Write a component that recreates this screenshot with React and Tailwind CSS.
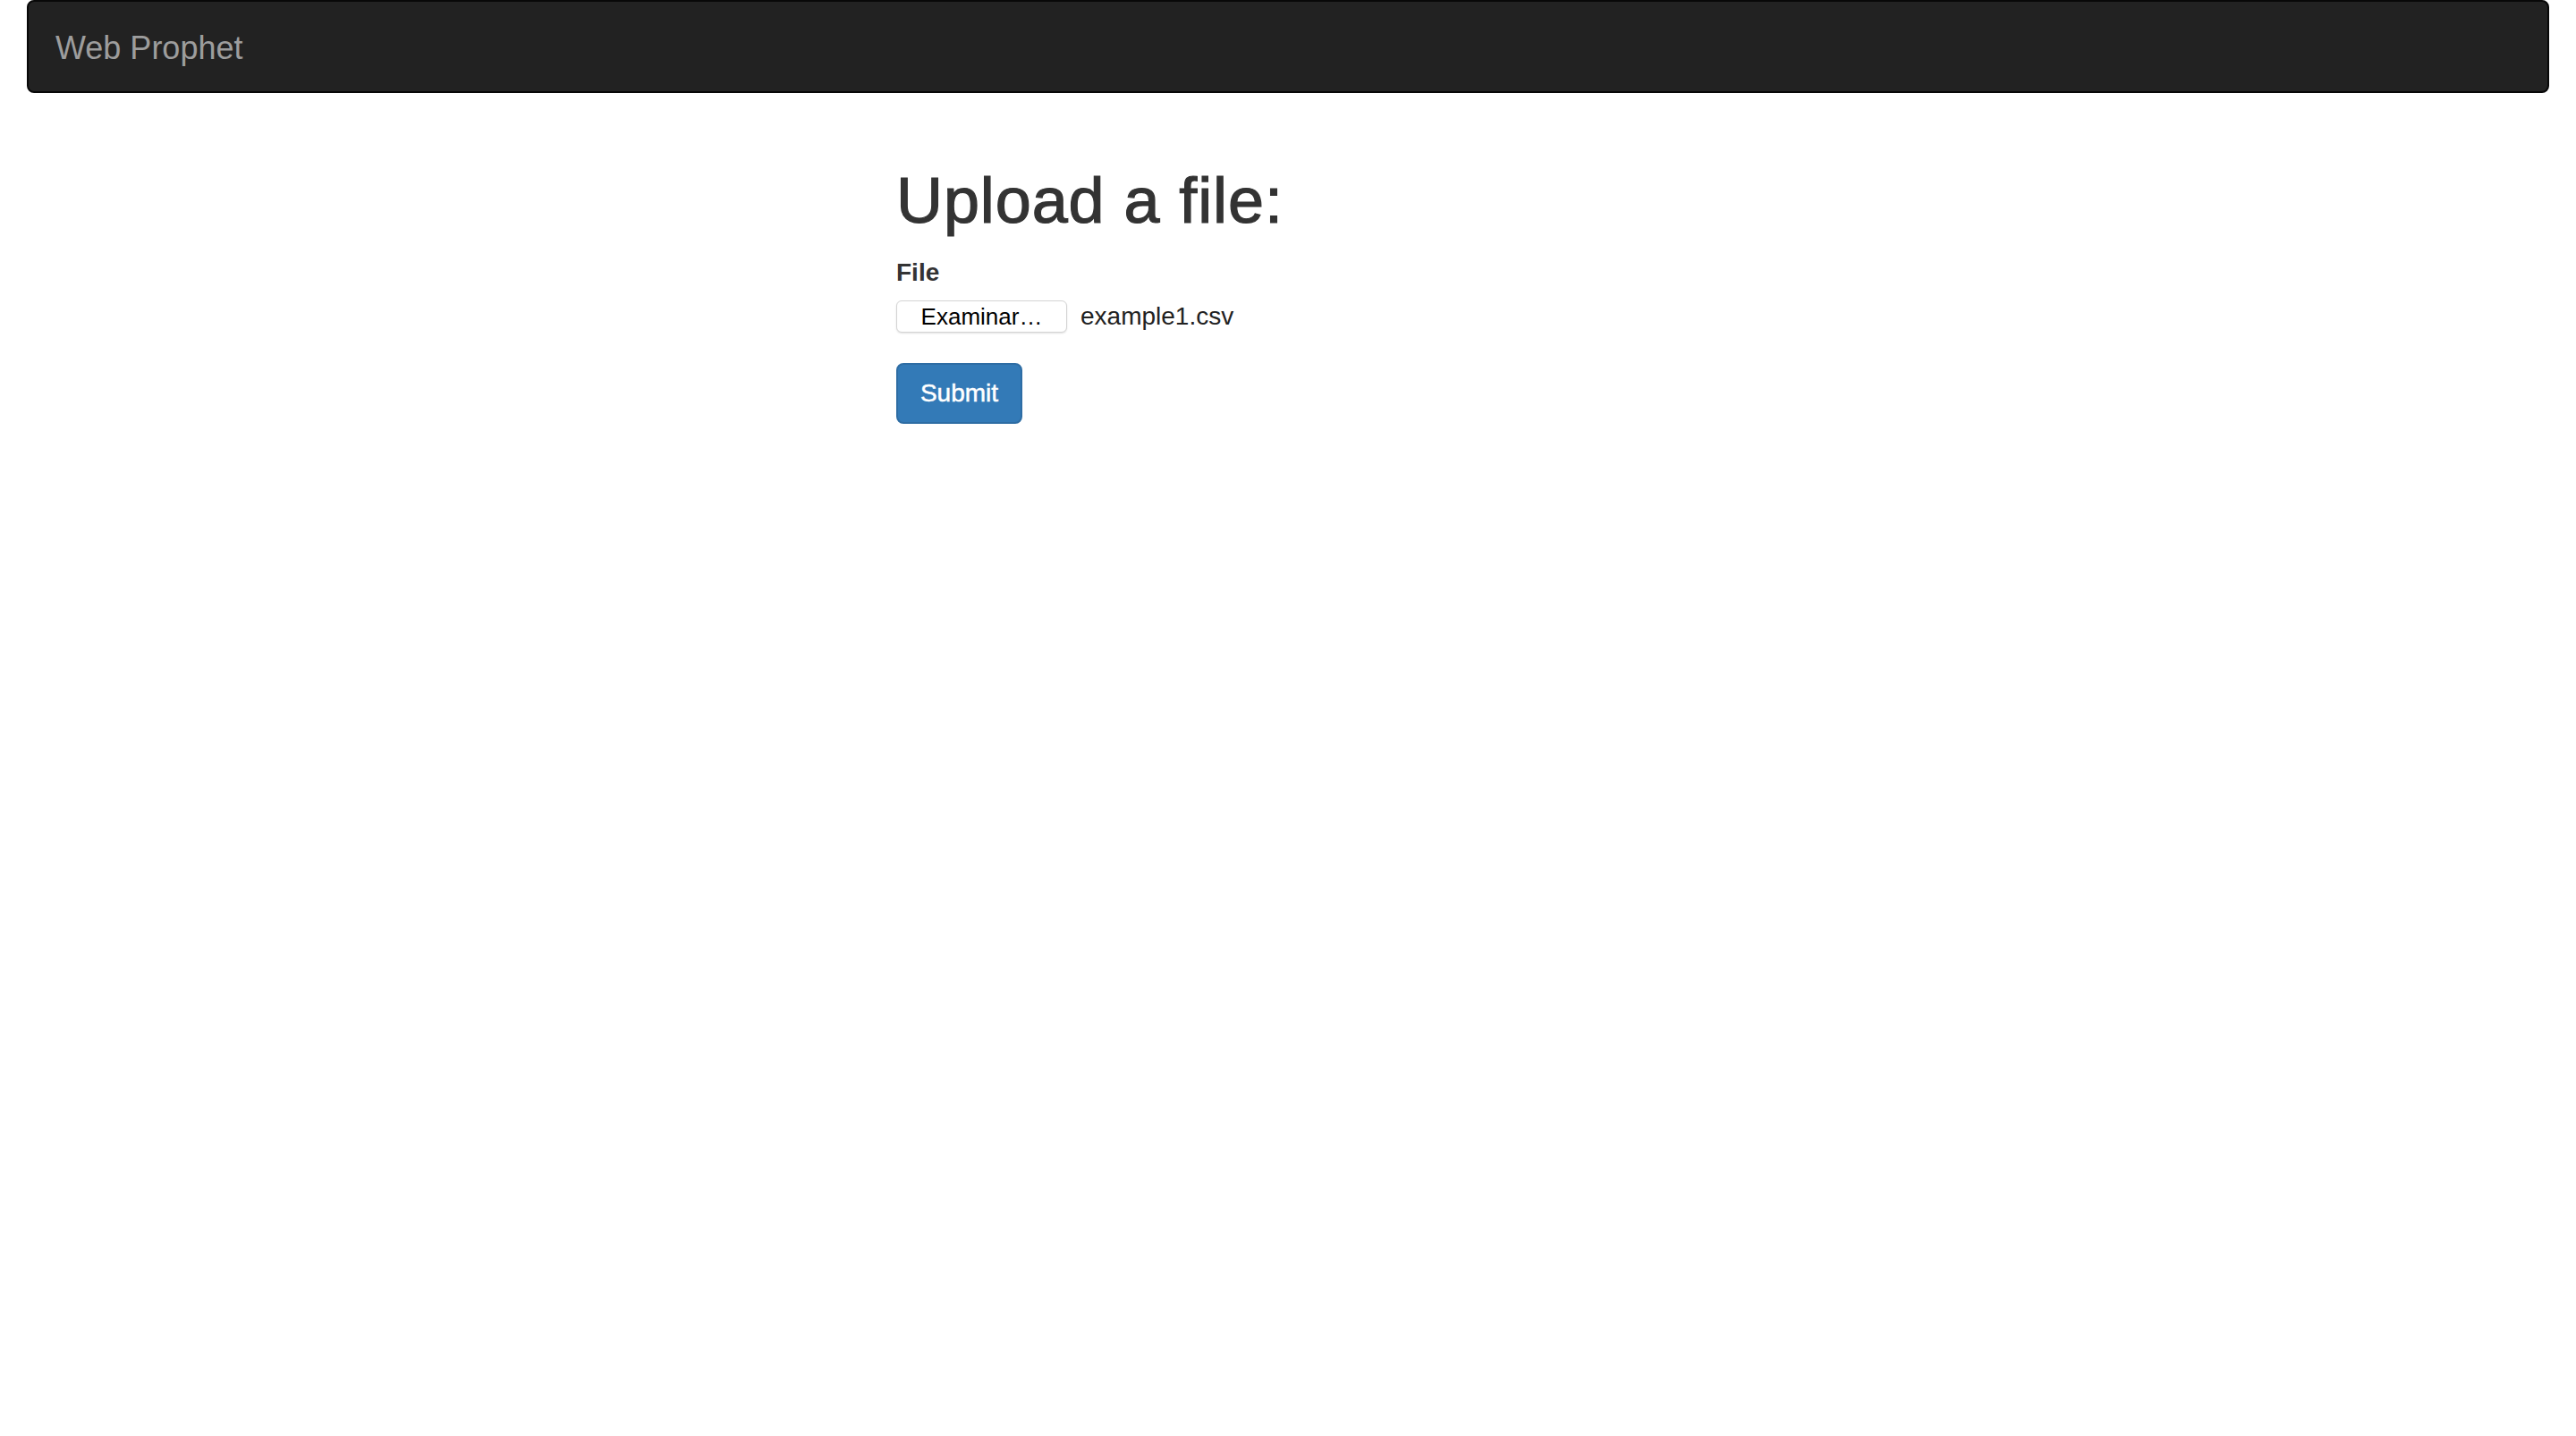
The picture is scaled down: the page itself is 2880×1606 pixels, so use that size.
export default function App() {
  return (
    <div className="min-h-screen bg-white text-[#333] font-['Liberation_Sans',Arial,sans-serif]">
      <nav className="mx-[30px] flex h-[104px] items-center rounded-[8px] border-2 border-[#080808] bg-[#222] pl-[30px] pt-[4px]">
        <span className="text-[36px] leading-[40px] text-[#9d9d9d]">Web Prophet</span>
      </nav>

      <div className="pl-[1002px] pt-[81px]">
        <h1 className="text-[72px] leading-[79px] tracking-[0.9px] text-[#333] [-webkit-text-stroke:1.2px_#333]">
          Upload a file:
        </h1>

        <form className="mt-[18px]" onSubmit={(e) => e.preventDefault()}>
          <div className="mb-[34px]">
            <label className="block pt-[3px] text-[28px] font-bold leading-[40px] text-[#333]">File</label>
            <div className="mt-[11px] flex h-[36px] items-center">
              <button
                type="button"
                className="flex h-[36px] w-[191px] items-center justify-center rounded-[6px] border border-[#d4d4d4] bg-white text-[26px] leading-none text-black shadow-[0_1px_2px_rgba(0,0,0,0.12)]"
              >
                Examinar…
              </button>
              <span className="ml-[15px] text-[28px] leading-none text-[#222]">example1.csv</span>
            </div>
          </div>

          <button
            type="submit"
            className="h-[68px] w-[141px] rounded-[8px] border-2 border-[#2e6da4] bg-[#337ab7] text-[28px] leading-none text-white [-webkit-text-stroke:0.5px_#fff]"
          >
            Submit
          </button>
        </form>
      </div>
    </div>
  );
}
